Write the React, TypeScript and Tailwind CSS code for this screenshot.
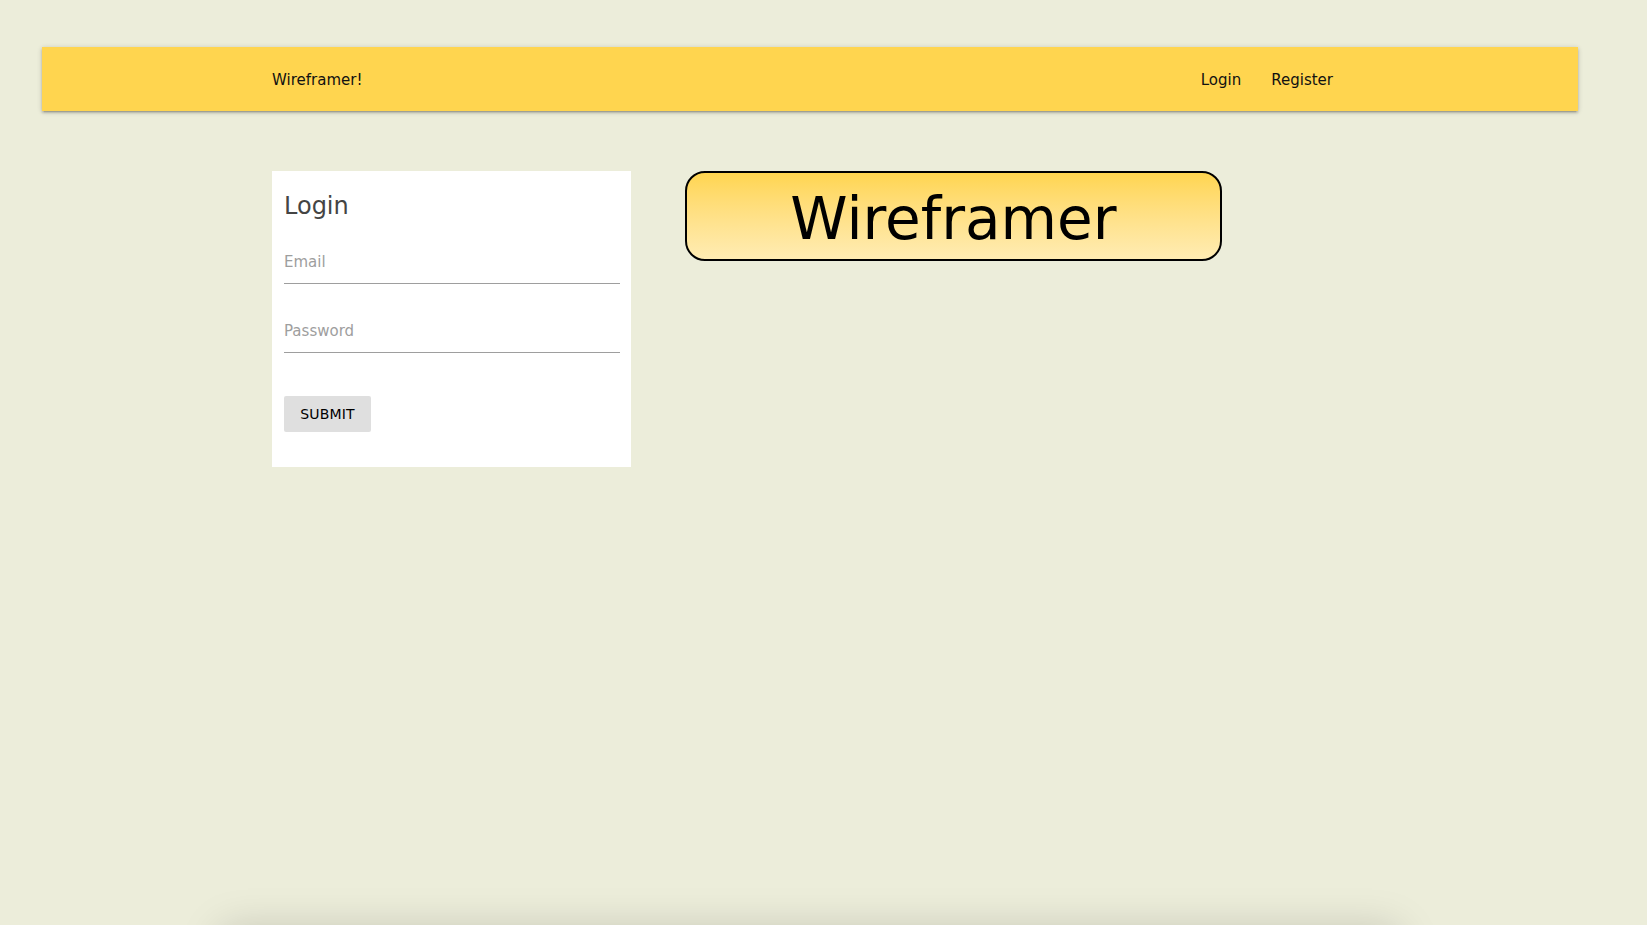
import { useState } from "react";

/** 상단 네비게이션 바 */
function NavBar() {
  return (
    <nav className="ml-[42px] mt-[47px] flex h-16 w-[1536px] shrink-0 items-center bg-[#ffd54f] shadow-[0_2px_2px_0_rgba(0,0,0,0.14),0_3px_1px_-2px_rgba(0,0,0,0.12),0_1px_5px_0_rgba(0,0,0,0.2)]">
      <div className="ml-[230px] flex w-[1076px] items-center justify-between pt-[2px] text-[15px] text-[#111]">
        <a className="cursor-pointer">Wireframer!</a>
        <ul className="flex">
          <li className="px-[15px]">Login</li>
          <li className="px-[15px]">Register</li>
        </ul>
      </div>
    </nav>
  );
}

/** 밑줄만 있는 입력칸 */
function LineInput({ placeholder, type }: { placeholder: string; type: string }) {
  const [value, setValue] = useState("");
  return (
    <input
      type={type}
      value={value}
      onChange={(e) => setValue(e.target.value)}
      placeholder={placeholder}
      className="h-[45px] w-full border-b border-[#9e9e9e] bg-transparent pt-[2px] text-[15px] text-[#333] outline-none placeholder:text-[#9e9e9e]"
    />
  );
}

function LoginCard() {
  return (
    <div className="h-[296px] w-[359px] bg-white px-3">
      <h2 className="mt-[19px] text-[24px] leading-8 text-[#444]">Login</h2>
      <div className="mt-[17px] w-[336px]">
        <LineInput placeholder="Email" type="email" />
      </div>
      <div className="mt-6 w-[336px]">
        <LineInput placeholder="Password" type="password" />
      </div>
      <button className="mt-[43px] h-9 w-[87px] rounded-[2px] bg-[#dfdfdf] text-[14px] leading-9 tracking-[0.2px] text-black">
        SUBMIT
      </button>
    </div>
  );
}

export default function App() {
  return (
    <div className="flex h-screen flex-col overflow-hidden bg-[#ecedda] font-['DejaVu_Sans',sans-serif]">
      <NavBar />
      <div className="ml-[272px] mt-[60px] flex shrink-0 items-start gap-[54px]">
        <LoginCard />
        {/* 로고 배너 */}
        <div className="flex h-[90px] w-[537px] items-center justify-center rounded-[20px] border-2 border-black bg-gradient-to-b from-[#ffd54f] to-[#ffecb3]">
          <span className="mt-[6px] text-[58px] leading-none text-black">Wireframer</span>
        </div>
      </div>
      {/* 화면 아래로 이어지는 카드 (그림자만 보임) */}
      <div className="ml-[222px] mt-[463px] h-[200px] w-[1176px] shrink-0 bg-[#ecedda] shadow-[0_0_40px_rgba(0,0,0,0.18)]" />
    </div>
  );
}
